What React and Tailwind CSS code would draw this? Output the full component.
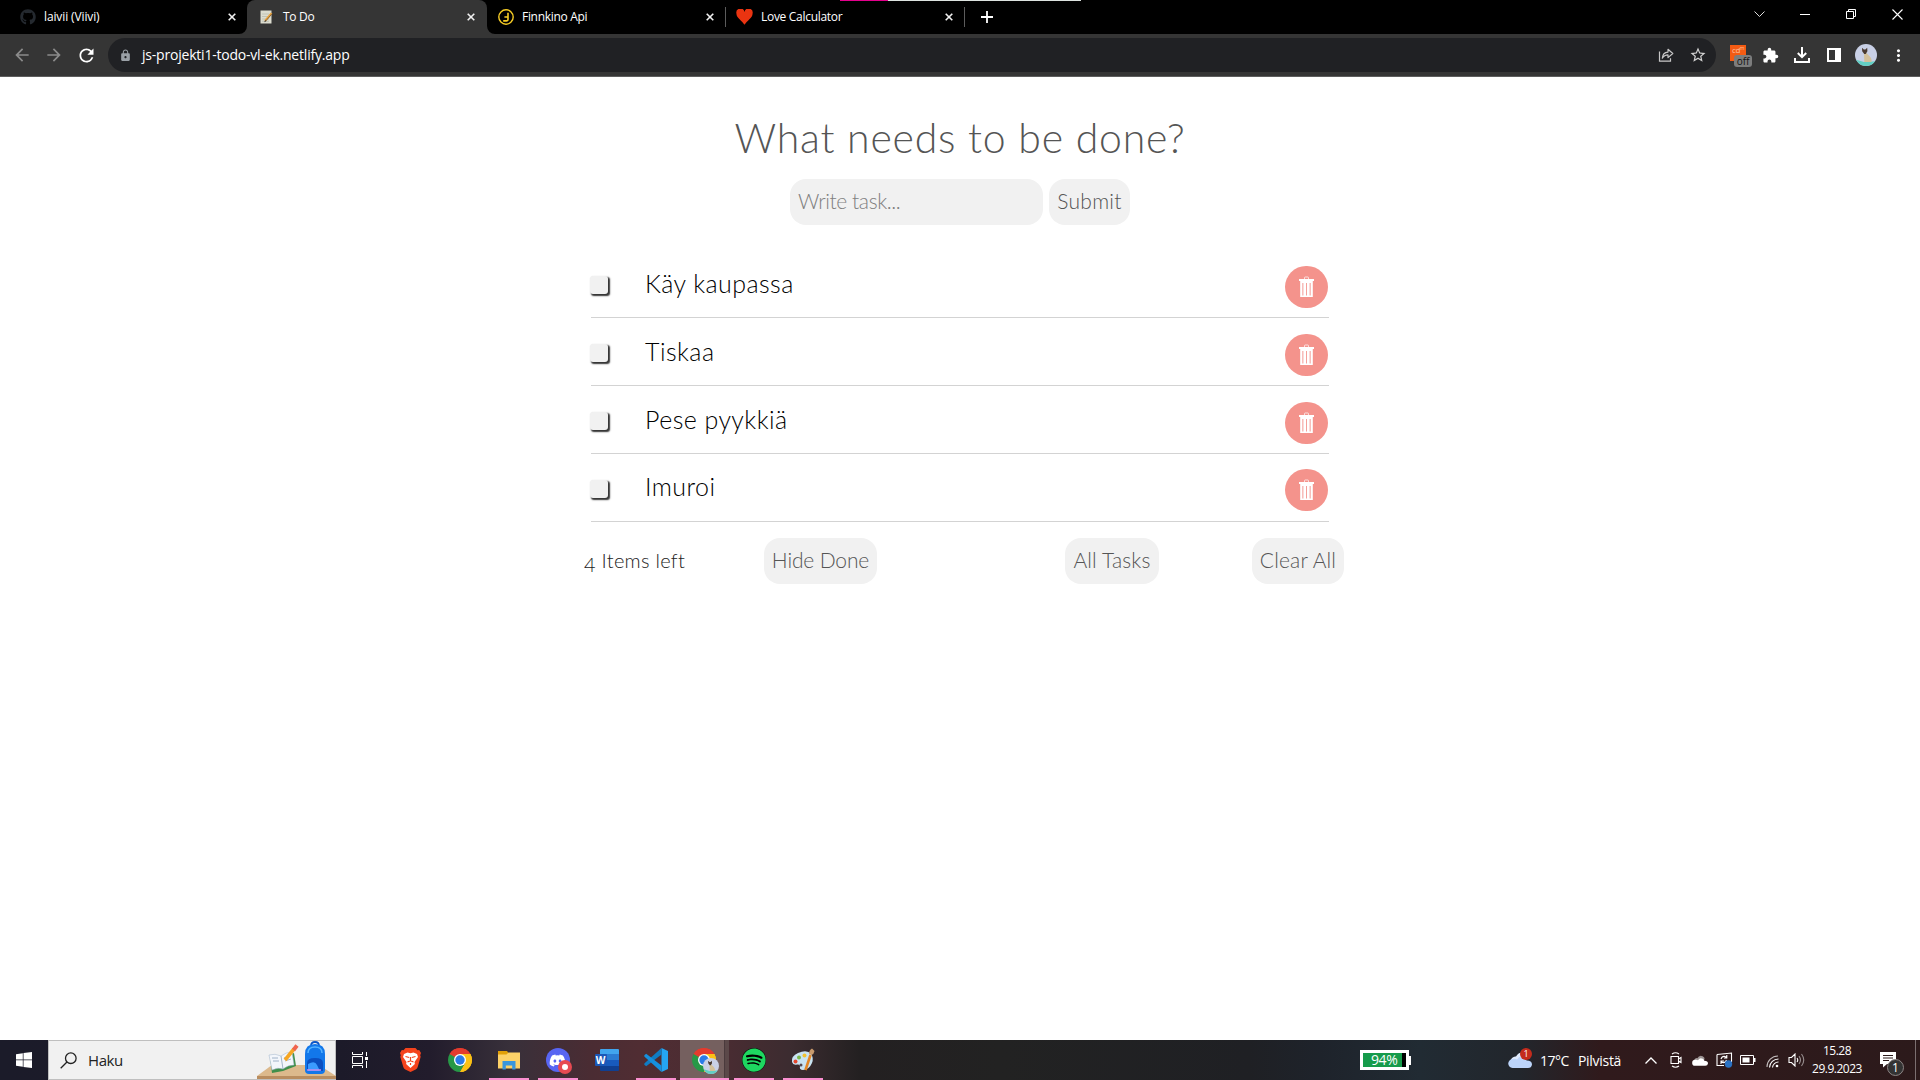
import React from "react";
import { MdArrowBack, MdArrowForward, MdRefresh, MdLock, MdStarBorder, MdExtension, MdMoreVert } from "react-icons/md";
import { FaGithub, FaDiscord, FaSpotify } from "react-icons/fa";

function CloseMark() {
  return (
    <svg className="size-[8px] shrink-0" viewBox="0 0 8 8" stroke="#f1f1f1" strokeWidth="1.6">
      <path d="M.7.7l6.6 6.6M7.3.7L.7 7.3" />
    </svg>
  );
}

function Tab({ icon, title, active, divider, textClass }) {
  return (
    <div className="relative flex h-[34px] w-[239px] shrink-0">
      <div className={active ? "relative -mr-px flex grow items-center rounded-t-[8px] bg-[#353535] pr-[12px] pl-[11px]" : "relative flex grow items-center pr-[11px] pl-[11px]"}>
        {active && (
          <>
            <svg className="absolute bottom-0 -left-[8px] size-[8px]" viewBox="0 0 8 8"><path d="M8 0v8H0a8 8 0 0 0 8-8z" fill="#353535" /></svg>
            <svg className="absolute -right-[8px] bottom-0 size-[8px]" viewBox="0 0 8 8"><path d="M0 0v8h8a8 8 0 0 1-8-8z" fill="#353535" /></svg>
          </>
        )}
        <div className="flex w-[17px] shrink-0 justify-center">{icon}</div>
        <div className={textClass}>{title}</div>
        <CloseMark />
      </div>
      {divider && <div className="absolute top-[7px] right-0 h-[20px] w-px translate-x-px bg-[#5c5c5c]" />}
    </div>
  );
}

function NoteIcon() {
  return (
    <svg className="h-[14px] w-[13px]" viewBox="0 0 13 14">
      <path d="M.5.5h11v13H.5z" fill="#dcdccf" />
      <path d="M2 4h7M2 6.5h7M2 9h7M2 11.3h7" stroke="#b9bcae" strokeWidth=".8" />
      <path d="M11.6 3.2L5 10.8" stroke="#e9a23b" strokeWidth="2" />
      <path d="M12 3.8L5.6 11.2" stroke="#6b4a28" strokeWidth=".7" />
      <path d="M5.6 10L4 12.2l2.2-1z" fill="#333" />
    </svg>
  );
}

function FinnkinoIcon() {
  return (
    <svg className="size-[16px]" viewBox="0 0 16 16" fill="none" stroke="#f7cd25">
      <circle cx="8" cy="8" r="7.2" strokeWidth="1.4" />
      <path d="M10 3.800v6.500a1.500 1.500 0 0 1-1.600 1.600H5.200M9.600 8H6.400" strokeWidth="1.600" />
    </svg>
  );
}

function HeartIcon() {
  return (
    <svg className="h-[16px] w-[17px]" viewBox="0 0 17 16">
      <path d="M8.500 15.800C6.300 11.600.4 9 .4 4.400A4 4 0 0 1 8.500 2.900 4 4 0 0 1 16.600 4.400C16.600 9 10.700 11.600 8.500 15.800z" fill="#ea3411" />
    </svg>
  );
}

function TabStrip() {
  return (
    <div className="flex h-[34px] bg-black pl-[8px]">
      <Tab icon={<FaGithub className="size-[16px] shrink-0 text-[#24292f]" />} title="laivii (Viivi)" textClass="grow pl-[8px] text-[12px] leading-[16px] tracking-[-0.12px]" />
      <Tab active icon={<NoteIcon />} title="To Do" textClass="grow pl-[8px] text-[12px] leading-[16px] tracking-[-0.3px]" />
      <Tab divider icon={<FinnkinoIcon />} title="Finnkino Api" textClass="grow pl-[8px] text-[12px] leading-[16px] tracking-[-0.3px]" />
      <Tab divider icon={<HeartIcon />} title="Love Calculator" textClass="grow pl-[8px] text-[12px] leading-[16px] tracking-[-0.3px]" />
      <div className="relative flex w-[46px] items-center justify-center">
        <svg className="size-[12px]" viewBox="0 0 12 12" stroke="#fff" strokeWidth="1.8"><path d="M6 0v12M0 6h12" /></svg>
      </div>
      <div className="absolute top-0 left-[840px] flex h-px">
        <div className="w-[48px] bg-[#e3008c]" />
        <div className="w-[193px] bg-[#dde3e0]" />
      </div>
      <div className="ml-auto flex h-[28px] items-center text-white">
        <div className="flex w-[46px] justify-center">
          <svg className="h-[6px] w-[11px]" viewBox="0 0 11 6" fill="none" stroke="#ddd"><path d="M.5.5l5 5 5-5" /></svg>
        </div>
        <div className="flex w-[46px] justify-center"><div className="h-px w-[10px] bg-white" /></div>
        <div className="flex w-[46px] justify-center">
          <svg className="size-[10px]" viewBox="0 0 10 10" fill="none" stroke="#fff"><path d="M.5 2.500h7v7h-7zM2.500 2.500v-2h7v7h-2" /></svg>
        </div>
        <div className="flex w-[46px] justify-center">
          <svg className="size-[11px]" viewBox="0 0 11 11" stroke="#fff" strokeWidth="1.1"><path d="M.5.5l10 10M10.500.5l-10 10" /></svg>
        </div>
      </div>
    </div>
  );
}

function CatAvatar({ className }) {
  return (
    <svg className={className} viewBox="0 0 22 22">
      <defs><clipPath id="avatarClip"><circle cx="11" cy="11" r="11" /></clipPath></defs>
      <g clipPath="url(#avatarClip)">
        <path d="M0 0h22v22H0z" fill="#c9d0e6" />
        <path d="M0 15.500q5 1 9 2.500 6 0 13-1v5H0z" fill="#62cfc4" />
        <path d="M9 9l.3 9h7q1-3-1.500-5.500L11.500 9z" fill="#d3c09a" />
        <path d="M7 3.800l1.800 1.700h1.600l1.800-1.700.2 3.500-1.700 2.700H9.200L7.200 7.300z" fill="#4a3a30" />
      </g>
    </svg>
  );
}

function Toolbar() {
  return (
    <div className="flex h-[43px] items-center border-b border-[#5d5d5d] bg-[#353535]">
      <div className="flex w-[108px] items-center pl-[12px]">
        <MdArrowBack className="size-[20px] text-[#8b8b8b]" />
        <MdArrowForward className="ml-[12px] size-[20px] text-[#8b8b8b]" />
        <MdRefresh className="ml-[12px] size-[21px] text-white" />
      </div>
      <div className="flex h-[34px] w-[1608px] items-center rounded-full bg-[#202124] pr-[9px] pl-[11px]">
        <MdLock className="size-[13px] text-[#9aa0a6]" />
        <div className="pl-[10px] text-[14px] leading-[20px] tracking-[-0.21px] text-white">js-projekti1-todo-vl-ek.netlify.app</div>
        <svg className="ml-auto size-[16px]" viewBox="0 0 16 16" fill="none" stroke="#c7c7c7" strokeWidth="1.2">
          <path d="M1.500 4.500v9.700h11v-3" />
          <path d="M4.300 11.200C4.600 7.300 6.800 5.300 10 5.100V2.300l4.800 4.200L10 10.600V7.900c-2.500 0-4.300.9-5.700 3.300z" strokeLinejoin="round" />
        </svg>
        <MdStarBorder className="ml-[15px] size-[18px] text-[#d2d2d2]" />
      </div>
      <div className="flex grow items-center">
        <div className="relative ml-[14px] h-[22px] w-[22px] shrink-0">
          <div className="mt-[1px] flex h-[16px] w-[16px] justify-center bg-[#f45b13] text-[8px] leading-[10px] tracking-[-0.5px] text-[#ffc09f]">cd<span className="text-[5px] leading-[7px]">m</span></div>
          <div className="absolute top-[11px] left-[4px] flex h-[12px] w-[18px] items-center justify-center rounded-[3px] bg-[#7d7d7d] text-[10px] leading-[12px] text-[#141414]">off</div>
        </div>
        <MdExtension className="ml-[10px] size-[17px] shrink-0 text-white" />
        <svg className="ml-[15px] size-[16px] shrink-0" viewBox="0 0 16 16" fill="none" stroke="#fff" strokeWidth="2"><path d="M8 0v10M3.800 6L8 10.200 12.200 6M1 11v4h14v-4" /></svg>
        <svg className="ml-[17px] h-[14px] w-[14px] shrink-0" viewBox="0 0 14 14"><path fillRule="evenodd" d="M0 0h14v14H0zM2 2v10h6V2z" fill="#fff" /></svg>
        <CatAvatar className="ml-[14px] size-[22px] shrink-0" />
        <MdMoreVert className="ml-[12px] size-[19px] shrink-0 text-white" />
      </div>
    </div>
  );
}

function TrashIcon() {
  return (
    <svg className="h-[22px] w-[15px]" viewBox="0 0 15 22">
      <path d="M5.500 3V1.700q0-.7.7-.7h2.600q.7 0 .7.7V3" fill="none" stroke="#fff" strokeWidth="1" opacity=".7" />
      <path d="M0 3h15v2H0zM1.200 5h12.600v16H1.200z" fill="#fff" />
      <path d="M3.800 7v12.500M11.200 7v12.500" stroke="#f7bcb8" strokeWidth="1.500" />
      <path d="M7.500 7v12.500" stroke="#f4a09a" strokeWidth="1" />
    </svg>
  );
}

function TaskRow({ title, last }) {
  return (
    <li className="flex h-[68px] border-b border-[#d3d3d3]">
      <div className="mt-[26px] -ml-px h-[18px] w-[18px] rounded-[3px] bg-[#f1f1f1] shadow-[1.5px_1.5px_1.5px_#333]" />
      <div className={last ? "pt-[16px] pl-[37px] text-[25px] leading-[32px] tracking-[0.45px]" : "pt-[17px] pl-[37px] text-[25px] leading-[32px] tracking-[0.45px]"}>{title}</div>
      <div className={last ? "mt-[15px] mr-px ml-auto flex h-[42px] w-[43px] items-center justify-center rounded-full bg-[#f4938c]" : "mt-[16px] mr-px ml-auto flex h-[42px] w-[43px] items-center justify-center rounded-full bg-[#f4938c]"}><TrashIcon /></div>
    </li>
  );
}

function TodoPage() {
  return (
    <main className="flex h-[963px] flex-col items-center bg-white pt-[41px] font-['Lato'] font-light">
      <h1 className="text-[41px] leading-[40px] tracking-[0.75px] whitespace-nowrap text-[#555]">What needs to be done?</h1>
      <form className="mt-[21px] flex h-[46px] gap-[6px] text-[21px] leading-[44px] text-[#555]">
        <div className="w-[253px] rounded-[16px] bg-[#f1f1f1] pl-[8px] tracking-[-0.4px] text-[#808080]">Write task...</div>
        <div className="w-[81px] rounded-[16px] bg-[#f1f1f1] text-center tracking-[0.3px] whitespace-nowrap">Submit</div>
      </form>
      <ul className="mt-[25px] w-[738px]">
        <TaskRow title="Käy kaupassa" />
        <TaskRow title="Tiskaa" />
        <TaskRow title="Pese pyykkiä" />
        <TaskRow title="Imuroi" last />
      </ul>
      <div className="mt-[16px] flex h-[46px] w-[752px] text-[21px] leading-[44px] whitespace-nowrap text-[#555]">
        <div className="w-[180px] shrink-0 text-[20px] tracking-[0.28px] text-[#222]"><span className="inline-block translate-y-[4px]">4</span> Items left</div>
        <div className="w-[113px] shrink-0 rounded-[16px] bg-[#f1f1f1] text-center tracking-[-0.15px]">Hide Done</div>
        <div className="ml-[188px] w-[94px] shrink-0 rounded-[16px] bg-[#f1f1f1] text-center tracking-[0.15px]">All Tasks</div>
        <div className="ml-[93px] w-[92px] shrink-0 rounded-[16px] bg-[#f1f1f1] text-center tracking-[0.15px]">Clear All</div>
      </div>
    </main>
  );
}

function ChromeIcon({ className }) {
  return (
    <svg className={className} viewBox="0 0 24 24">
      <path d="M12 12L1.610 6A12 12 0 0 1 22.390 6z" fill="#e33b2e" />
      <path d="M12 12V24A12 12 0 0 1 1.610 6z" fill="#279847" />
      <path d="M12 6H22.390A12 12 0 0 1 12 24L17.200 15z" fill="#fbc116" />
      <path d="M1.610 6L6.800 15 12 12V6z" fill="#279847" />
      <path d="M1.610 6A12 12 0 0 1 22.390 6H12L6.800 9z" fill="#e33b2e" />
      <path d="M6.800 15L12 12l5.200 3L12 24z" fill="#279847" />
      <path d="M17.200 15L12 24A12 12 0 0 0 22.390 6H12z" fill="#fbc116" />
      <circle cx="12" cy="12" r="6" fill="#fff" />
      <circle cx="12" cy="12" r="4.700" fill="#2a7be8" />
    </svg>
  );
}

function SearchArt() {
  return (
    <svg className="-mr-px ml-auto h-[38px] w-[79px] shrink-0" viewBox="0 0 79 38">
      <path d="M15 24h47l17 11H0z" fill="#dcb98c" />
      <path d="M0 35h79v3H0z" fill="#b98d5f" />
      <path d="M13 16l11 0 13-4 2 13-13 5-11 2z" fill="#3f8f4a" />
      <path d="M12 14q6-2 12 1 5-4 11-4l2 13q-6 0-11 4-5-2-11 1z" fill="#f3f6fb" stroke="#9fb3c9" strokeWidth=".5" />
      <path d="M24 15l2 13M15 17l6 0M16 20l6 0M27 17l6-2M28 20l6-2" stroke="#8aa2bd" strokeWidth=".8" />
      <path d="M28 19L37 8" stroke="#f6a623" strokeWidth="3.600" />
      <path d="M36.500 9L40 4.500" stroke="#f0654f" strokeWidth="4" />
      <path d="M54 5q0-4 4-4t4 4" fill="none" stroke="#0a56c8" strokeWidth="1.800" />
      <path d="M48 13q0-10 10-10t10 10v16q0 4-4 4H52q-4 0-4-4z" fill="#1277ea" />
      <path d="M51 12q0-6 7-6t7 6" fill="none" stroke="#53b2ff" strokeWidth="1.500" />
      <path d="M50 22q0-5 8-5t8 5v8H50z" fill="#0b4fc0" />
      <path d="M51 30v-7q7-4 9 1l3 6z" fill="#3b9bff" />
      <path d="M50 29h14" stroke="#c58cf0" strokeWidth="1.500" />
    </svg>
  );
}

function AppCell({ children, open }) {
  return (
    <div className="flex h-[40px] w-[49px] shrink-0 flex-col items-center">
      <div className="flex h-[38px] items-center justify-center pt-[2px]">{children}</div>
      {open && <div className="h-[2px] w-[40px] bg-[#fb8fd0]" />}
    </div>
  );
}

function BraveIcon() {
  return (
    <svg className="h-[24px] w-[21px]" viewBox="0 0 21 24">
      <path d="M5.500 0h10l2 2.300 1.700-.3L21 5l-.8 2.200.5 1.600-3 10.200q-.5 1.500-2 2.500L10.500 24l-5.200-2.500q-1.500-1-2-2.500L.3 8.800l.5-1.600L0 5l1.800-3 1.700.3z" fill="#f4431d" />
      <path d="M4 6l3.500-1.500 3 .7 3-.7L17 6l1 3-3.500 5 .4 2-4.400 4-4.400-4 .4-2L3 9z" fill="#fff" />
      <path d="M5.500 8.500l3.700 1M15.500 8.500l-3.700 1M10.500 9v4M7.500 14l3-1.300 3 1.300M10.500 15v2" stroke="#f4431d" strokeWidth="1.200" fill="none" />
    </svg>
  );
}

function ExplorerIcon() {
  return (
    <svg className="h-[19px] w-[22px]" viewBox="0 0 22 19">
      <path d="M0 0h9l1.500 2H21q1 0 1 1v14H0z" fill="#e2a007" />
      <path d="M0 3.500h8.500l2-2H22v16H0z" fill="#fdd268" />
      <path d="M4.500 10h13v8.500h-3.300v-4H7.800v4H4.500z" fill="#3a96dd" />
    </svg>
  );
}

function DiscordIcon() {
  return (
    <div className="relative flex size-[24px] items-center justify-center rounded-full bg-[#5865f2]">
      <FaDiscord className="size-[17px] text-white" />
      <div className="absolute -right-[2px] -bottom-[2px] flex size-[14px] items-center justify-center rounded-full bg-[#e74a52]"><div className="size-[6px] rounded-full bg-white" /></div>
    </div>
  );
}

function WordIcon() {
  return (
    <div className="relative flex h-[22px] w-[24px] justify-end">
      <div className="h-[22px] w-[19px] overflow-hidden rounded-[1px]">
        <div className="h-[5px] bg-[#41a5ee]" /><div className="h-[6px] bg-[#2b7cd3]" /><div className="h-[6px] bg-[#185abd]" /><div className="h-[5px] bg-[#103f91]" />
      </div>
      <div className="absolute top-[5px] left-0 flex size-[12px] items-center justify-center rounded-[1px] bg-[#1b58b8] text-[10px] leading-[12px] font-bold text-white">W</div>
    </div>
  );
}

function CodeIcon() {
  return (
    <svg className="size-[24px]" viewBox="0 0 24 24">
      <path d="M17.500 0L24 3v18l-6.500 3z" fill="#25a5f2" />
      <path d="M17.500 6.500L2.200 18.200.3 16.700v-1.300L17.500 0z" fill="#0f7cc4" />
      <path d="M17.500 17.500L2.200 5.800.3 7.300v1.300L17.500 24z" fill="#1690de" />
    </svg>
  );
}

function PaintIcon() {
  return (
    <svg className="size-[24px]" viewBox="0 0 24 24">
      <path d="M1 14Q0 8 7 5q9-4 13 1 3 4 1 9-3 7-9 7-4 0-3-4 0-2-3-1.500Q2 17.500 1 14z" fill="#c9e3f2" />
      <circle cx="4.500" cy="13.500" r="2" fill="#e4482f" /><circle cx="8" cy="9.500" r="2" fill="#79b84a" /><circle cx="13.500" cy="7.500" r="2" fill="#f2c12e" /><circle cx="10" cy="17" r="1.500" fill="#5a4a50" />
      <path d="M19.500 7L14.500 22" stroke="#e38524" strokeWidth="2.600" />
      <path d="M18 6q0-4 3-5.500l2.500 2.500q-.5 3-3 4z" fill="#c99a6c" />
    </svg>
  );
}

function Cloud({ className, fill, back }) {
  return (
    <svg className={className} viewBox="0 0 24 16">
      <path d="M5 12Q1 10 4 6q2-2 4-1.500Q11-1 16 1.500q3 1.500 3 4.500l-6 4z" fill={back} />
      <path d="M4.500 16A4.500 4.500 0 0 1 5 7q2-.5 4 .5Q12 3 16 5.500q2 1 2.500 3Q24 8.500 24 12.500 23.500 16 20 16z" fill={fill} />
    </svg>
  );
}

function Tray() {
  return (
    <div className="ml-auto flex h-[40px] items-center text-white">
      <div className="flex h-[20px] w-[49px] items-center">
        <div className="flex h-[20px] w-[49px] shrink-0 items-center border-[3px] border-white bg-black">
          <div className="h-[14px] w-[39px] bg-[#169b4b] pl-[8px] text-[14px] leading-[14px] tracking-[-0.4px]">94%</div>
        </div>
        <div className="h-[9px] w-[2px] shrink-0 bg-white" />
      </div>
      <div className="relative ml-[99px] h-[40px] w-[24px]">
        <Cloud className="mt-[12px] h-[16px] w-[24px]" fill="#bcd4fa" back="#dfeafc" />
        <div className="absolute top-[8px] left-[12px] flex size-[12px] items-center justify-center rounded-full bg-[#c42b1c] text-[9px] leading-[12px]">1</div>
      </div>
      <div className="w-[46px] pl-[8px] text-[14px] tracking-[-0.5px] whitespace-nowrap">17°C</div>
      <div className="w-[60px] text-[14px] tracking-[-0.3px] whitespace-nowrap">Pilvistä</div>
      <div className="flex w-[26px] justify-center"><svg className="h-[7px] w-[12px]" viewBox="0 0 12 7" fill="none" stroke="#fff" strokeWidth="1.300"><path d="M.5 6.500L6 1l5.500 5.500" /></svg></div>
      <div className="flex w-[24px] justify-center">
        <svg className="h-[16px] w-[12px]" viewBox="0 0 12 16" fill="none" stroke="#fff" strokeWidth="1.100"><path d="M1 4.500h7.500v7H1zM8.500 7l2.500-1.500v5L8.500 9M2 2q3.500-2.500 7 0M2 14q3.500 2.500 7 0" /></svg>
      </div>
      <div className="flex w-[24px] justify-center"><Cloud className="h-[11px] w-[16px]" fill="#fff" back="#9c9494" /></div>
      <div className="flex w-[24px] justify-center">
        <svg className="h-[16px] w-[17px]" viewBox="0 0 17 16" fill="none" stroke="#fff" strokeWidth="1.100">
          <path d="M1 2.500L15.500 1v9M8 13.500H1v-11" /><path d="M5 7q1-3 4-2.500l1.500 1M10.800 3v3H8M10.500 8q-1 3-4 2.500L5 9.500M5 12V9h3" /><circle cx="12.500" cy="12" r="3.700" fill="#2a72c3" stroke="none" />
        </svg>
      </div>
      <div className="flex w-[24px] justify-center">
        <svg className="h-[10px] w-[16px]" viewBox="0 0 16 10"><path d="M.5.5h13v9H.5z" fill="none" stroke="#fff" /><path d="M2.500 2.500h7v5h-7zM14 3h1.500v4H14z" fill="#fff" /></svg>
      </div>
      <div className="flex w-[24px] justify-center">
        <svg className="mt-[3px] size-[13px]" viewBox="0 0 13 13" fill="none" stroke="#fff" strokeWidth="1.100"><path d="M1 12A11 11 0 0 1 12 1" opacity=".7" /><path d="M3.500 12.500a9 9 0 0 1 9-8.500M6.500 12.500a6 6 0 0 1 6-5.500" /><circle cx="11" cy="11" r="1.300" fill="#fff" stroke="none" /></svg>
      </div>
      <div className="flex w-[24px] justify-center">
        <svg className="h-[14px] w-[17px]" viewBox="0 0 17 14" fill="none" stroke="#fff" strokeWidth="1.100"><path d="M1 4.500h2.500L7 1v12L3.500 9.500H1zM9 5q1.500 2 0 4" /><path d="M11 3.200q3 3.800 0 7.600M13.500 1q4.500 6 0 12" opacity=".5" /></svg>
      </div>
      <div className="flex w-[58px] flex-col items-center text-[12px] leading-[18px] tracking-[-0.5px] whitespace-nowrap"><div>15.28</div><div>29.9.2023</div></div>
      <div className="relative ml-[14px] h-[40px] w-[25px]">
        <svg className="mt-[12px] h-[16px] w-[16px]" viewBox="0 0 16 16"><path d="M0 0h16v12H7l-4 3.500V12H0z" fill="#fff" /><path d="M3 3.500h10M3 6h10M3 8.500h6" stroke="#2c1a1a" /></svg>
        <div className="absolute top-[19px] left-[7px] flex size-[17px] items-center justify-center rounded-full border border-[#8d8585] bg-[#333] text-[12px] leading-[14px]">1</div>
      </div>
      <div className="mr-[4px] ml-[10px] h-[40px] w-px bg-[#7b6f70]" />
    </div>
  );
}

function Taskbar() {
  return (
    <div className="flex h-[40px] w-full bg-[linear-gradient(90deg,#1b1b29_0px,#1c1a29_340px,#221c2c_430px,#38303a_510px,#4a2c33_590px,#502d33_640px,#4a2c32_720px,#3c2c30_790px,#232021_860px,#222_1000px,#1f2024_1250px,#1e232b_1320px,#212b33_1420px,#22262c_1520px,#301a1c_1600px,#2c1a1b_1920px)]">
      <div className="flex h-[40px] w-[48px] shrink-0 items-center justify-center">
        <svg className="size-[16px]" viewBox="0 0 16 16" fill="#fff"><path d="M0 2.200L6.800 1.200v6.400H0zM7.500 1.100L16 0v7.600H7.500zM0 8.300h6.800v6.500L0 13.800zM7.500 8.300H16V16l-8.500-1.100z" /></svg>
      </div>
      <div className="flex h-[40px] w-[288px] shrink-0 items-center border border-[#bfbfbf] bg-[#f1f1f1] pl-[11px]">
        <svg className="size-[17px] shrink-0" viewBox="0 0 17 17" fill="none" stroke="#222" strokeWidth="1.300"><circle cx="10.800" cy="6.200" r="5.300" /><path d="M7 10L.7 16.300" /></svg>
        <div className="pl-[11px] text-[15px] tracking-[-0.4px] text-[#222]">Haku</div>
        <SearchArt />
      </div>
      <div className="flex w-[50px] shrink-0 items-center justify-center pr-[2px]">
        <svg className="h-[16px] w-[17px]" viewBox="0 0 17 16" fill="none" stroke="#fff"><path d="M.5 0v2.500h10V0M.5 16v-2.500h10V16M.5 4.500h10v7H.5zM14.500 0v4M14.500 9v7" /><path d="M13 5h3v3h-3z" fill="#fff" stroke="none" /></svg>
      </div>
      <AppCell><BraveIcon /></AppCell>
      <AppCell><ChromeIcon className="size-[24px]" /></AppCell>
      <AppCell open><ExplorerIcon /></AppCell>
      <AppCell open><DiscordIcon /></AppCell>
      <AppCell><WordIcon /></AppCell>
      <AppCell open><CodeIcon /></AppCell>
      <div className="flex h-[40px] w-[49px] shrink-0 border-b-2 border-[#fb8fd0] bg-[#75605f]">
        <div className="relative flex h-[38px] w-[45px] items-center justify-center border-r border-[#4a3a3c] pt-[2px] pl-[4px]">
          <ChromeIcon className="size-[24px]" />
          <CatAvatar className="absolute top-[18px] left-[23px] size-[16px]" />
        </div>
        <div className="grow bg-[#5b4849]" />
      </div>
      <AppCell open><div className="flex size-[24px] items-center justify-center rounded-full bg-black"><FaSpotify className="size-[24px] text-[#1ed760]" /></div></AppCell>
      <AppCell open><PaintIcon /></AppCell>
      <Tray />
    </div>
  );
}

export default function App() {
  return (
    <div className="flex h-[1080px] w-[1920px] flex-col overflow-hidden bg-white font-['Open_Sans',sans-serif] text-white [&_main]:text-black">
      <TabStrip />
      <Toolbar />
      <TodoPage />
      <Taskbar />
    </div>
  );
}
